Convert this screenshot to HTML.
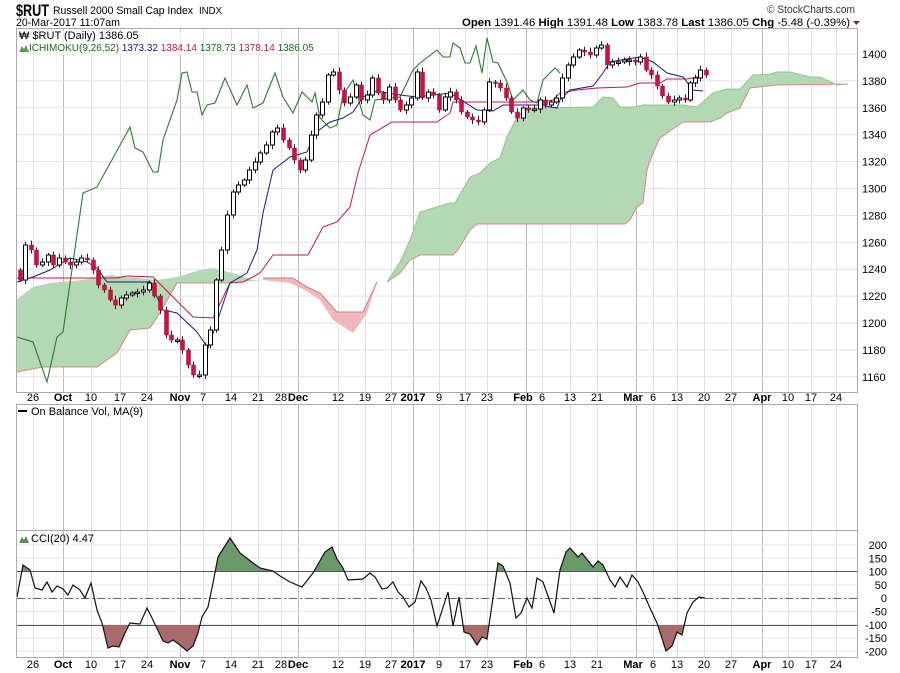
<!DOCTYPE html>
<html><head><meta charset="utf-8"><style>
body{margin:0;background:#fff;width:900px;height:673px;overflow:hidden;font-family:"Liberation Sans",sans-serif}
svg{position:absolute;left:0;top:0}
text{font-family:"Liberation Sans",sans-serif}
</style></head><body>
<svg id="s" width="900" height="673" xmlns="http://www.w3.org/2000/svg">
<g id="grid"></g>
<text x="16" y="16" font-size="17" font-weight="bold" textLength="33" lengthAdjust="spacingAndGlyphs">$RUT</text>
<text x="53" y="14" font-size="11" textLength="140" lengthAdjust="spacingAndGlyphs">Russell 2000 Small Cap Index</text>
<text x="199" y="14" font-size="10" textLength="23" lengthAdjust="spacingAndGlyphs">INDX</text>
<text x="16" y="26" font-size="11" textLength="104" lengthAdjust="spacingAndGlyphs">20-Mar-2017 11:07am</text>
<text x="767" y="13" font-size="11" fill="#333" textLength="88" lengthAdjust="spacingAndGlyphs">© StockCharts.com</text>
<text x="462" y="26" font-size="11" textLength="388" lengthAdjust="spacingAndGlyphs"><tspan font-weight="bold">Open</tspan> 1391.46 <tspan font-weight="bold">High</tspan> 1391.48 <tspan font-weight="bold">Low</tspan> 1383.78 <tspan font-weight="bold">Last</tspan> 1386.05 <tspan font-weight="bold">Chg</tspan> -5.48 (-0.39%)</text>
<path d="M853,21 L860,21 L856.5,25Z" fill="#8b2040"/>
<polygon fill="#b4d8b4" stroke="none" points="16,300 33,287 50,283 83,280 110,275 127,277 157,280 177,277 200,270 213,268 233,273 253,280 263,280 230,283 177,283 160,313 150,328 130,330 117,353 97,367 43,367 16,372"/>
<polyline fill="none" stroke="#d88" stroke-width="1" points="16,372 43,367 97,367 117,353 130,330 150,328 160,313 177,283 230,283"/>
<polygon fill="#f0b8bc" stroke="none" points="263,278 293,278 307,287 320,293 337,312 363,312 377,282 367,313 353,333 333,320 320,300 305,290 290,283 263,280"/>
<polyline fill="none" stroke="#d77" points="263,278 293,278 307,287 320,293 337,312 363,312 377,282"/>
<polygon fill="#b4d8b4" points="377,282 387,282 400,262 410,240 420,212 450,203 455,203 470,177 480,173 490,163 500,158 507,137 517,117 527,108 593,107 603,97 613,98 620,107 633,107 643,105 683,105 697,107 713,93 727,89 740,89 753,75 770,74 777,72 790,72 810,77 820,77 837,85 848,84 777,85 750,88 740,108 727,113 720,118 710,122 683,122 660,138 653,153 647,170 643,203 637,207 630,220 625,224 477,224 470,230 458,250 453,255 420,255 410,260 400,273 387,282"/>
<polyline fill="none" stroke="#d88" points="387,282 400,273 410,260 420,255 453,255 458,250 470,230 477,224 625,224 630,220 637,207 643,203 647,170 653,153 660,138 683,122 710,122 720,118 727,113 740,108 750,88 777,85 848,84"/>
<polyline fill="none" stroke="#8c8" points="387,282 400,262 410,240 420,212 450,203 455,203 470,177 480,173 490,163 500,158 507,137 517,117 527,108 593,107 603,97 613,98 620,107 633,107 643,105 683,105 697,107 713,93 727,89 740,89 753,75 770,74 777,72 790,72 810,77 820,77 837,85 848,84"/>
<polyline fill="none" stroke="#2d7a2d" stroke-width="1.1" points="17,337 33,342 47,382 57,337 63,332 83,193 97,187 130,127 135,148 143,152 153,172 158,172 163,140 177,100 182,73 187,72 192,92 197,92 202,115 207,105 215,103 225,78 237,105 247,85 253,108 263,103 275,73 283,97 293,113 302,92 312,102 315,93 320,118 330,128 337,125 343,95 353,80 363,115 370,120 375,100 400,97 413,70 420,63 437,50 443,57 450,57 453,43 460,48 465,63 470,63 476,46 482,73 487,38 493,62 498,63 507,82 513,100 523,90 530,100 537,103 543,80 555,68 560,73"/>
<polyline fill="none" stroke="#c0184a" stroke-width="1" points="17,278 117,278 127,276 153,277 163,287 173,297 193,317 213,318 230,283 243,282 260,273 273,255 308,255 323,227 337,222 350,207 358,173 370,135 392,122 437,122 450,113 453,102 540,102 553,100 560,93 577,90 597,88 627,87 640,83 660,83 667,79 687,79 697,77 703,77"/>
<polyline fill="none" stroke="#1a1a8a" stroke-width="1" points="17,282 33,277 50,270 70,258 87,262 97,268 107,282 150,282 163,310 177,313 197,332 208,348 220,313 230,283 247,273 257,250 263,213 273,170 290,157 307,152 315,133 330,122 343,118 353,112 363,97 377,91 400,95 417,97 450,93 477,110 493,111 503,105 540,105 557,108 560,100 570,90 593,86 603,73 610,62 627,59 640,57 653,62 667,73 683,77 693,90 703,91"/>
<g id="candles"></g>
<rect x="18" y="31" width="170" height="24" fill="#fff" opacity="0.7"/>
<text x="19" y="39" font-size="11" font-family="DejaVu Sans">₩ $RUT (Daily) 1386.05</text>
<path d="M19,52 L22,46 L24,49 L26,45 L29,52Z" fill="#5a9a5a"/>
<text x="29" y="51" font-size="10" font-family="DejaVu Sans"><tspan fill="#1a6a1a">ICHIMOKU(9,26,52)</tspan> <tspan fill="#1a1a8a">1373.32</tspan> <tspan fill="#c0184a">1384.14</tspan> <tspan fill="#1a6a1a">1378.73</tspan> <tspan fill="#c0184a">1378.14</tspan> <tspan fill="#1a6a1a">1386.05</tspan></text>
<path d="M18,411 L27,411" stroke="#000" stroke-width="2"/>
<text x="31" y="415" font-size="11" font-family="DejaVu Sans">On Balance Vol, MA(9)</text>
<clipPath id="cu"><rect x="0" y="0" width="900" height="571"/></clipPath>
<clipPath id="cd"><rect x="0" y="625" width="900" height="60"/></clipPath>
<g id="cci"></g>
<path d="M19,543 L22,537 L24,540 L26,536 L29,543Z" fill="#5a8a5a"/>
<text x="31" y="542" font-size="11" font-family="DejaVu Sans">CCI(20) 4.47</text>
<rect x="16.5" y="28.5" width="841" height="364" fill="none" stroke="#aaa"/>
<rect x="16.5" y="404.5" width="841" height="126" fill="none" stroke="#aaa"/>
<rect x="16.5" y="530.5" width="841" height="127" fill="none" stroke="#aaa"/>
<g id="labels" font-size="11"></g>
</svg>
<script>
var NS="http://www.w3.org/2000/svg";
function el(p,t,a,txt){var e=document.createElementNS(NS,t);for(var k in a)e.setAttribute(k,a[k]);if(txt!=null)e.textContent=txt;p.appendChild(e);return e;}
var g=document.getElementById('grid'),lb=document.getElementById('labels');
var xs=[[33,'26'],[63,'Oct',1],[91,'10'],[120,'17'],[147,'24'],[180,'Nov',1],[203,'7'],[231,'14'],[258,'21'],[281,'28'],[298,'Dec',1],[338,'12'],[365,'19'],[391,'27'],[413,'2017',1],[439,'9'],[465,'17'],[487,'23'],[523,'Feb',1],[542,'6'],[570,'13'],[597,'21'],[633,'Mar',1],[653,'6'],[677,'13'],[704,'20'],[731,'27'],[762,'Apr',1],[788,'10'],[811,'17'],[836,'24']];
var gx={63:63,180:180,298:298,413:413,523:526,633:636,762:762};
xs.forEach(function(v){var x=(gx[v[0]]||v[0])+.5;var c=v[2]?'#bbb':'#e2e2e2';
 el(g,'line',{x1:x,y1:29,x2:x,y2:392,stroke:c});el(g,'line',{x1:x,y1:405,x2:x,y2:530,stroke:c});el(g,'line',{x1:x,y1:531,x2:x,y2:657,stroke:c});
 var at={x:v[0],'text-anchor':'middle','font-weight':v[2]?'bold':'normal','font-size':11};
 if(v[1]=='2017'){at.textLength=25;at.lengthAdjust='spacingAndGlyphs';}
 at.y=401;el(lb,'text',at,v[1]);var b={};for(var k in at)b[k]=at[k];b.y=668;el(lb,'text',b,v[1]);});
for(var i=0;i<=12;i++){var y=54+i*26.9;el(g,'line',{x1:17,y1:y,x2:857,y2:y,stroke:'#e2e2e2'});var p=1400-i*20;el(lb,'text',{x:862,y:y+4},''+p);}
for(var i=0;i<=8;i++){var y=545+i*13.3;el(g,'line',{x1:17,y1:y,x2:857,y2:y,stroke:'#e6e6e6'});el(lb,'text',{x:887,y:y+4,'text-anchor':'end','font-size':11},''+(200-i*50));}
el(g,'line',{x1:17,y1:571.5,x2:857,y2:571.5,stroke:'#555'});el(g,'line',{x1:17,y1:625.5,x2:857,y2:625.5,stroke:'#555'});
el(g,'line',{x1:17,y1:598.5,x2:857,y2:598.5,stroke:'#666','stroke-dasharray':'8,3,2,3'});
var cl=[[20,280],[25,245],[31,250],[36,265],[42,262],[48,255],[53,265],[59,258],[65,262],[70,265],[76,262],[81,258],[87,260],[93,270],[98,285],[104,290],[110,300],[115,305],[121,298],[126,295],[132,293],[137,292],[143,290],[149,283],[154,296],[160,310],[166,335],[171,340],[177,340],[182,350],[188,365],[193,375],[199,375],[205,345],[210,330],[216,280],[221,250],[227,215],[233,192],[238,185],[244,180],[249,170],[255,162],[260,153],[266,145],[272,132],[277,128],[283,140],[289,148],[294,160],[300,170],[305,160],[311,135],[316,115],[322,102],[328,75],[333,72],[339,90],[344,103],[350,97],[356,85],[361,100],[367,95],[372,78],[378,93],[383,100],[389,87],[395,100],[400,110],[406,105],[411,98],[417,72],[422,98],[428,92],[433,95],[439,110],[445,97],[450,92],[456,100],[461,112],[467,117],[472,120],[478,122],[484,110],[489,82],[495,83],[500,88],[506,98],[511,112],[517,118],[523,108],[528,110],[534,109],[540,100],[545,105],[551,102],[556,98],[562,78],[568,65],[573,57],[579,50],[584,52],[590,55],[596,48],[601,45],[607,65],[612,62],[618,62],[624,60],[629,60],[635,62],[640,57],[646,70],[651,75],[657,86],[662,96],[668,102],[674,100],[679,98],[685,100],[690,83],[695,78],[700,70],[706,75]];
var cg=document.getElementById('candles');var prev=270;
cl.forEach(function(c,i){var x=c[0],o=prev,cy=c[1];var top=Math.min(o,cy),bot=Math.max(o,cy);if(bot-top<1.5)bot=top+1.5;
 var hw=2+((i*7)%5)*0.6,lw=2+((i*3)%4)*0.7;
 el(cg,'line',{x1:x+.5,y1:top-hw,x2:x+.5,y2:bot+lw,stroke:'#222'});
 if(cy>o) el(cg,'rect',{x:x-1.5,y:top,width:4,height:bot-top,fill:'#cc1040',stroke:'#a01030','stroke-width':.5});
 else el(cg,'rect',{x:x-1.5,y:top,width:4,height:bot-top,fill:'#fff',stroke:'#000'});
 prev=cy;});
var cp="17,597 23,565 30,570 35,588 42,590 47,582 52,592 57,586 63,589 68,595 73,585 80,590 85,598 91,583 97,610 102,623 108,648 113,646 119,647 125,633 130,623 140,624 147,608 153,620 163,641 168,643 173,640 180,645 187,651 193,646 198,633 202,617 208,607 213,583 218,557 230,538 240,553 253,563 260,568 273,571 280,576 290,582 302,587 313,573 325,552 332,547 337,559 343,568 348,580 363,579 370,573 375,577 382,589 387,588 393,582 398,592 403,597 409,607 415,602 421,581 426,588 431,600 437,626 448,592 453,626 459,597 464,632 470,634 477,645 482,637 487,639 498,563 503,566 510,583 516,618 521,613 527,598 532,608 537,578 543,582 554,613 560,570 566,552 570,548 578,557 582,553 593,567 598,561 603,565 610,580 615,587 620,577 627,587 632,575 638,582 643,592 650,608 657,623 666,651 672,646 677,632 682,635 687,613 693,602 699,597 705,598";
var cc=document.getElementById('cci');
el(cc,'polygon',{points:"17,571 "+cp+" 705,571",fill:'#6a9a6a','clip-path':'url(#cu)'});
el(cc,'polygon',{points:"17,625 "+cp+" 705,625",fill:'#a86a6a','clip-path':'url(#cd)'});
el(cc,'polyline',{points:cp,fill:'none',stroke:'#111','stroke-width':1.2});
</script>
</body></html>
